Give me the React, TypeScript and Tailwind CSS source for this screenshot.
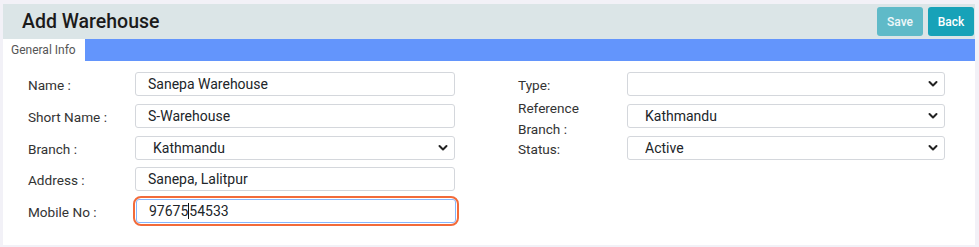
import React from 'react';

// Add Warehouse form screen

const inputCls =
  'h-[24px] w-[320px] rounded-[3px] border border-[#d4d7dc] bg-white px-[12px] text-[14px] text-[#212529] outline-none';

function Chevron() {
  return (
    <svg
      className="pointer-events-none absolute right-[7px] top-1/2 -translate-y-1/2"
      width="10"
      height="7"
      viewBox="0 0 10 7"
      fill="none"
    >
      <path d="M1.5 1.5 L5 5 L8.5 1.5" stroke="#222" strokeWidth="2" strokeLinecap="round" strokeLinejoin="round" />
    </svg>
  );
}

function SelectBox({ value, width }: { value: string; width: string }) {
  return (
    <div className={`relative ${width}`}>
      <select
        defaultValue={value}
        className="h-[24px] w-full appearance-none rounded-[3px] border border-[#d4d7dc] bg-white pl-[17px] pr-[24px] text-[14px] text-[#212529] outline-none"
      >
        <option value={value}>{value}</option>
      </select>
      <Chevron />
    </div>
  );
}

function Row({ label, children, labelW }: { label: string; children: React.ReactNode; labelW: string }) {
  return (
    <div className="flex h-[24px] items-center">
      <label className={`${labelW} pt-[3px] text-[13.6px] leading-[21px] text-[#333]`}>{label}</label>
      {children}
    </div>
  );
}

export default function App() {
  return (
    <div
      className="h-[247px] w-[979px] bg-[#f2f1f7] pl-[3px] pr-[4px] pt-[4px]"
      style={{ fontFamily: 'Roboto, "Liberation Sans", sans-serif' }}
    >
      <div className="h-[241px] bg-white">
        {/* Header */}
        <div className="flex h-[35px] items-center justify-between bg-[#dbe5e7] pl-[19px] pr-[1px]">
          <h1 className="text-[19.5px] font-medium text-[#1b1b1b]">Add Warehouse</h1>
          <div className="flex gap-[5px]">
            <button className="h-[29px] w-[46px] rounded-[3px] bg-[#5fbac8] text-[12px] font-medium text-white/90">
              Save
            </button>
            <button className="h-[29px] w-[46px] rounded-[3px] bg-[#17a2b8] text-[12px] font-medium text-white">
              Back
            </button>
          </div>
        </div>

        {/* Tabs */}
        <div className="flex h-[22px] bg-[#6395fc]">
          <div className="flex w-[82px] items-center bg-white pl-[8px] text-[12px] text-[#555]">General Info</div>
        </div>

        {/* Form */}
        <div className="flex gap-[61px] pl-[25px] pt-[11px]">
          <div className="flex flex-col gap-[8px]">
            <Row label="Name :" labelW="w-[107px]">
              <input className={inputCls} defaultValue="Sanepa Warehouse" />
            </Row>
            <Row label="Short Name :" labelW="w-[107px]">
              <input className={inputCls} defaultValue="S-Warehouse" />
            </Row>
            <Row label="Branch :" labelW="w-[107px]">
              <SelectBox value="Kathmandu" width="w-[320px]" />
            </Row>
            <div className="mt-[-1px]">
              <Row label="Address :" labelW="w-[107px]">
                <input className={inputCls} defaultValue="Sanepa, Lalitpur" />
              </Row>
            </div>
            <Row label="Mobile No :" labelW="w-[107px]">
              <div className="rounded-[6px] p-[1px] outline outline-2 outline-[#f26b3a]">
                <div className="flex h-[24px] w-[320px] items-center rounded-[3px] border border-[#86b7fe] bg-white px-[12px] text-[14px] text-[#212529]">
                  <span>97675</span>
                  <span className="h-[16px] w-[1px] bg-[#111]" />
                  <span>54533</span>
                </div>
              </div>
            </Row>
          </div>

          <div className="flex flex-col gap-[8px]">
            <Row label="Type:" labelW="w-[109px]">
              <SelectBox value="" width="w-[318px]" />
            </Row>
            <div className="flex h-[24px] items-center">
              <label className="w-[109px] pt-[5px] text-[13.6px] leading-[21px] text-[#333]">
                Reference
                <br />
                Branch :
              </label>
              <SelectBox value="Kathmandu" width="w-[318px]" />
            </div>
            <Row label="Status:" labelW="w-[109px]">
              <SelectBox value="Active" width="w-[318px]" />
            </Row>
          </div>
        </div>
      </div>
    </div>
  );
}
